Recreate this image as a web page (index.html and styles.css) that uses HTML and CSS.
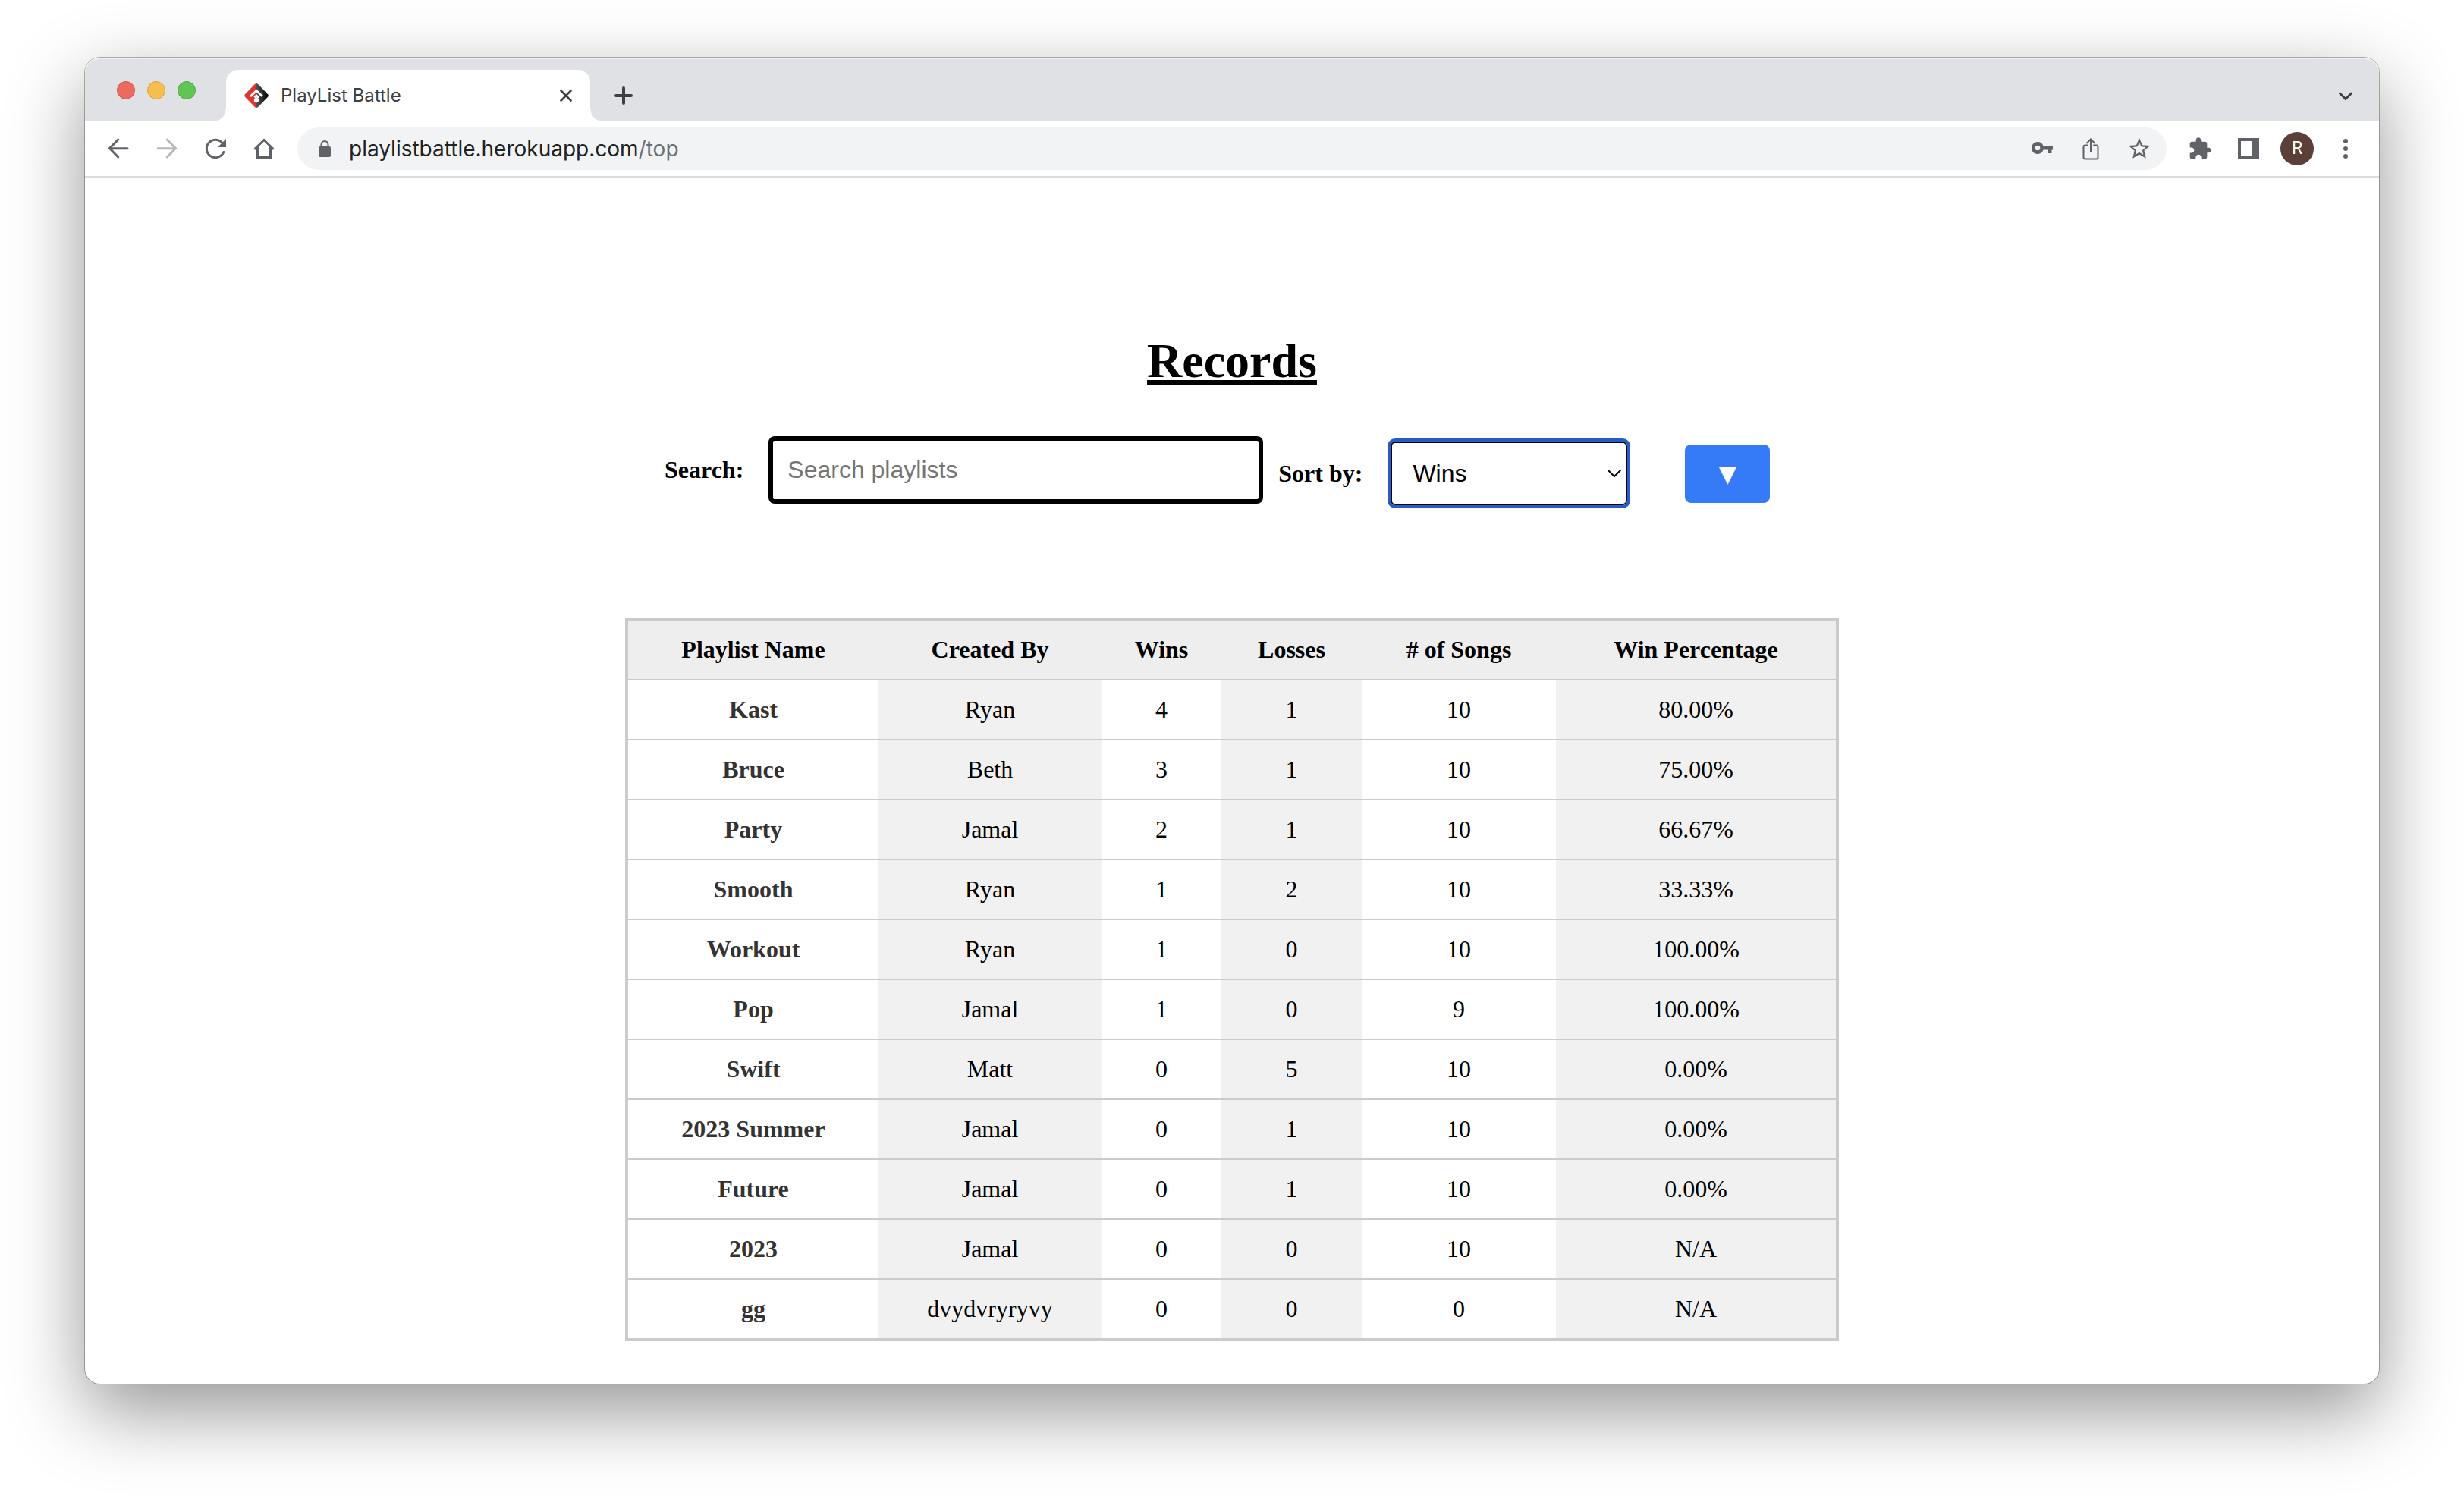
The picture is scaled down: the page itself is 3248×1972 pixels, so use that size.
FILE: index.html
```html
<!DOCTYPE html>
<html lang="en">
<head>
<meta charset="utf-8">
<title>PlayList Battle</title>
<link rel="stylesheet" href="styles.css">
</head>
<body>
<div class="window">
  <header class="tab-strip">
    <div class="lights">
      <span class="light light-close"></span>
      <span class="light light-minimize"></span>
      <span class="light light-zoom"></span>
    </div>
    <div class="tab">
      <svg class="icon" viewBox="0 0 32 32" aria-hidden="true">
        <defs><linearGradient id="dark" x1="16" x2="32" y1="0" y2="0" gradientUnits="userSpaceOnUse"><stop offset="0" stop-color="#555"/><stop offset="1" stop-color="#000"/></linearGradient></defs>
        <path d="M16 0 14 .8 1 14.2Q-.5 16 1 17.800L14 31.200 16 32Z" fill="#d9372f"/>
        <path d="M16 0 18 .8 31 14.200Q32.500 16 31 17.800L18 31.200 16 32Z" fill="url(#dark)"/>
        <path d="M8 17 16 9.500 24 17M13.500 18.500 16 16 19 18.800" fill="none" stroke="#fff" stroke-width="3"/>
        <circle cx="16" cy="22" r="3.200" fill="#fff"/>
      </svg>
      <span class="tab-title">PlayList Battle</span>
      <button class="tab-close" aria-label="Close tab"><svg viewBox="0 0 16 16"><path d="M1.500 1.500 14.500 14.500M14.500 1.500 1.500 14.500"/></svg></button>
    </div>
    <button class="new-tab" aria-label="New tab"><svg viewBox="0 0 24 24"><path d="M12 2V22M2 12H22"/></svg></button>
    <button class="tool tab-search" aria-label="Search tabs"><svg class="icon" viewBox="0 0 32 32"><path d="M8.500 13 16 20.500 23.500 13" fill="none" stroke="#3c4043" stroke-width="3" stroke-linecap="round"/></svg></button>
  </header>
  <nav class="toolbar" aria-label="Browser toolbar">
    <div class="tools">
      <button class="tool" aria-label="Back"><svg class="icon line" viewBox="0 0 32 32"><path d="M28 15.700H5M15.800 4 4.500 15.500 15.800 27"/></svg></button>
      <button class="tool faded" aria-label="Forward" disabled><svg class="icon line" viewBox="0 0 32 32"><path d="M4 15.700H27M16.200 4 27.500 15.500 16.200 27"/></svg></button>
      <button class="tool" aria-label="Reload"><svg class="icon line" viewBox="0 0 32 32"><path d="M24.600 8A11.700 11.700 0 1 0 26.800 20.500"/><path d="M30 3V14H19Z" fill="#5f6368" stroke="none"/></svg></button>
      <button class="tool" aria-label="Home"><svg class="icon line" viewBox="0 0 32 32"><path d="M4.300 16 16 4.500 27.700 16M7.500 13.500V27.500H24.500V13.500"/></svg></button>
    </div>
    <div class="address">
      <svg class="icon" viewBox="0 0 32 32" aria-hidden="true"><rect x="8" y="13" width="16" height="14" rx="2" fill="#5f6368"/><path d="M11.500 13.500V10.500a4.500 4.500 0 0 1 9 0V13.500" fill="none" stroke="#5f6368" stroke-width="2"/></svg>
      <span class="url">playlistbattle.herokuapp.com<span class="path">/top</span></span>
      <div class="tools">
        <button class="tool" aria-label="Passwords"><svg class="icon" viewBox="0 0 32 32"><path fill-rule="evenodd" d="M10 7a8 8 0 1 0 7.500 10.500H24V22H28.500V17.500H30V12.500H17.500A8 8 0 0 0 10 7zM10 11.700a3.300 3.300 0 1 1 0 6.600 3.300 3.300 0 0 1 0-6.600z" fill="#5f6368"/></svg></button>
        <button class="tool" aria-label="Share"><svg class="icon thin" viewBox="0 0 32 32"><path d="M12 11.500H8.500a2 2 0 0 0-2 2V27.500a2 2 0 0 0 2 2H23.500a2 2 0 0 0 2-2V13.500a2 2 0 0 0-2-2H20M16 20V4M11 8.500 16 3.500 21 8.500"/></svg></button>
        <button class="tool" aria-label="Bookmark"><svg class="icon-large" viewBox="0 0 24 24"><path fill="#5f6368" d="M22 9.240l-7.190-.62L12 2 9.190 8.630 2 9.240l5.460 4.730L5.820 21 12 17.270 18.180 21l-1.630-7.030L22 9.240zM12 15.400l-3.760 2.270 1-4.280-3.320-2.880 4.380-.38L12 6.100l1.710 4.040 4.380.38-3.320 2.880 1 4.280L12 15.400z"/></svg></button>
      </div>
    </div>
    <div class="tools">
      <button class="tool" aria-label="Extensions"><svg class="icon" viewBox="0 0 24 24"><path fill="#5f6368" d="M20.500 11H19V7c0-1.100-.9-2-2-2h-4V3.500C13 2.120 11.880 1 10.500 1S8 2.120 8 3.500V5H4c-1.100 0-1.990.9-1.990 2v3.800H3.500c1.490 0 2.700 1.210 2.700 2.700s-1.210 2.700-2.700 2.700H2V20c0 1.100.9 2 2 2h3.800v-1.500c0-1.490 1.210-2.700 2.700-2.700 1.490 0 2.700 1.210 2.700 2.700V22H17c1.100 0 2-.9 2-2v-4h1.500c1.380 0 2.500-1.120 2.500-2.500S21.880 11 20.500 11z"/></svg></button>
      <button class="tool" aria-label="Side panel"><svg class="icon" viewBox="0 0 32 32"><path fill="#5f6368" fill-rule="evenodd" d="M2 2H30V30H2ZM6 6V26H20V6Z"/></svg></button>
      <button class="tool" aria-label="Profile"><span class="avatar">R</span></button>
      <button class="tool" aria-label="Menu"><svg class="icon" viewBox="0 0 32 32" fill="#5f6368"><circle cx="16" cy="6" r="3"/><circle cx="16" cy="16" r="3"/><circle cx="16" cy="26" r="3"/></svg></button>
    </div>
  </nav>
  <main class="page">
    <h1 class="title">Records</h1>
    <form class="filters">
      <div class="field search-field">
        <label for="search">Search:</label>
        <input class="search" id="search" type="text" placeholder="Search playlists">
      </div>
      <div class="field">
        <label for="sort">Sort by:</label>
        <div class="select-wrap">
          <select class="sort" id="sort"><option>Wins</option><option>Losses</option><option>Win Percentage</option></select>
          <svg class="caret" viewBox="0 0 20 12" aria-hidden="true"><path d="M2 2 10 10 18 2"/></svg>
        </div>
        <button class="order" type="button" aria-label="Descending">▼</button>
      </div>
    </form>
    <table class="records">
      <colgroup><col class="col-name"><col class="col-by"><col class="col-wins"><col class="col-losses"><col class="col-songs"><col class="col-pct"></colgroup>
      <thead><tr><th>Playlist Name</th><th>Created By</th><th>Wins</th><th>Losses</th><th># of Songs</th><th>Win Percentage</th></tr></thead>
      <tbody>
        <tr><td><a href="#">Kast</a></td><td>Ryan</td><td>4</td><td>1</td><td>10</td><td>80.00%</td></tr>
        <tr><td><a href="#">Bruce</a></td><td>Beth</td><td>3</td><td>1</td><td>10</td><td>75.00%</td></tr>
        <tr><td><a href="#">Party</a></td><td>Jamal</td><td>2</td><td>1</td><td>10</td><td>66.67%</td></tr>
        <tr><td><a href="#">Smooth</a></td><td>Ryan</td><td>1</td><td>2</td><td>10</td><td>33.33%</td></tr>
        <tr><td><a href="#">Workout</a></td><td>Ryan</td><td>1</td><td>0</td><td>10</td><td>100.00%</td></tr>
        <tr><td><a href="#">Pop</a></td><td>Jamal</td><td>1</td><td>0</td><td>9</td><td>100.00%</td></tr>
        <tr><td><a href="#">Swift</a></td><td>Matt</td><td>0</td><td>5</td><td>10</td><td>0.00%</td></tr>
        <tr><td><a href="#">2023 Summer</a></td><td>Jamal</td><td>0</td><td>1</td><td>10</td><td>0.00%</td></tr>
        <tr><td><a href="#">Future</a></td><td>Jamal</td><td>0</td><td>1</td><td>10</td><td>0.00%</td></tr>
        <tr><td><a href="#">2023</a></td><td>Jamal</td><td>0</td><td>0</td><td>10</td><td>N/A</td></tr>
        <tr><td><a href="#">gg</a></td><td>dvydvryryvy</td><td>0</td><td>0</td><td>0</td><td>N/A</td></tr>
      </tbody>
    </table>
  </main>
</div>
</body>
</html>
```
FILE: styles.css
```css
* { box-sizing: border-box; }

body {
  margin: 0;
  padding: 76px 112px 148px;
  background: #fff;
  color: #000;
  font-family: "Liberation Serif", "Times New Roman", serif;
  font-size: 32px;
  line-height: 37px;
}

button {
  padding: 0;
  border: 0;
  background: none;
  color: inherit;
}

svg { display: block; }
.icon { width: 32px; height: 32px; flex: none; }
.icon-large { width: 34px; height: 34px; }
.line { fill: none; stroke: #5f6368; stroke-width: 3; stroke-linecap: round; }
.thin { fill: none; stroke: #5f6368; stroke-width: 2; stroke-linecap: round; }

.window {
  border-radius: 20px;
  background: #fff;
  box-shadow: 0 0 0 1px rgba(0, 0, 0, .28), 0 36px 100px rgba(0, 0, 0, .42);
}

/* Tab strip */
.tab-strip {
  display: flex;
  align-items: center;
  height: 84px;
  padding: 0 12px 0 42px;
  border-radius: 20px 20px 0 0;
  background: #dfe1e5;
  box-shadow: inset 0 2px 0 #eff0f2;
}
.lights { display: flex; gap: 16px; margin-right: 40px; padding-top: 2px; }
.light { width: 24px; height: 24px; border-radius: 50%; border: 1px solid; }
.light-close { background: #ed6a5e; border-color: #d55549; }
.light-minimize { background: #f4bf4f; border-color: #d8a23c; }
.light-zoom { background: #61c554; border-color: #50a73f; }

.tab {
  position: relative;
  display: flex;
  align-items: center;
  align-self: flex-end;
  gap: 16px;
  width: 480px;
  height: 68px;
  padding: 0 24px;
  border-radius: 16px 16px 0 0;
  background: #fff;
}
.tab::before,
.tab::after {
  content: "";
  position: absolute;
  bottom: 0;
  width: 16px;
  height: 16px;
}
.tab::before { right: 100%; background: radial-gradient(circle at 0 0, transparent 15px, #fff 16px); }
.tab::after { left: 100%; background: radial-gradient(circle at 100% 0, transparent 15px, #fff 16px); }
.tab-title {
  flex: 1;
  color: #3c4043;
  font-family: Inter, sans-serif;
  font-size: 24px;
  line-height: 32px;
}
.tab-close svg { width: 16px; height: 16px; stroke: #3c4043; stroke-width: 2.6; stroke-linecap: round; }
.new-tab { align-self: flex-end; height: 68px; margin-left: 32px; }
.new-tab svg { width: 24px; height: 24px; stroke: #3c4043; stroke-width: 4; stroke-linecap: round; }

/* Toolbar */
.toolbar {
  display: flex;
  align-items: center;
  gap: 12px;
  padding: 8px 12px;
  border-bottom: 2px solid #dadbdc;
}
.tools { display: flex; align-items: center; }
.tool { display: flex; align-items: center; justify-content: center; width: 64px; height: 56px; }
.tab-search { align-self: flex-end; height: 68px; margin-left: auto; }
.faded { opacity: .45; }
.address {
  display: flex;
  flex: 1;
  align-items: center;
  height: 56px;
  padding: 0 4px 0 20px;
  border-radius: 28px;
  background: #f1f3f4;
}
.url {
  flex: 1;
  margin-left: 16px;
  color: #202124;
  font-family: Inter, sans-serif;
  font-size: 28px;
  line-height: 40px;
}
.path { color: #6b6e72; }
.avatar {
  width: 44px;
  height: 44px;
  border-radius: 50%;
  background: #5a4038;
  color: #fff;
  font-family: Roboto, sans-serif;
  font-size: 23px;
  line-height: 44px;
}

/* Page content */
.page { padding: 205px 40px 56px; }
.title {
  margin: 0 0 63px;
  font-size: 64px;
  line-height: 73px;
  text-align: center;
  text-decoration: underline;
}
.filters {
  display: flex;
  align-items: flex-end;
  gap: 20px;
  max-width: 1496px;
  margin: 0 auto 144px;
}
.field { display: flex; flex: none; align-items: center; }
.field label { font-weight: bold; }
.search-field { padding-bottom: 6px; }
.search {
  width: 652px;
  height: 89px;
  margin-left: 33px;
  padding: 0 19px;
  border: 6px solid #000;
  border-radius: 8px;
  background: #fff;
  font-family: "Liberation Sans", Arial, sans-serif;
  font-size: 32px;
}
.search::placeholder { color: #757575; opacity: 1; }
.select-wrap { position: relative; margin-left: 33px; }
.sort {
  display: block;
  width: 320px;
  height: 92px;
  padding: 0 29px;
  border: 4px solid #245dca;
  border-radius: 10px;
  background: #fff;
  box-shadow: inset 0 0 0 2px #000;
  color: #000;
  font-family: "Liberation Sans", Arial, sans-serif;
  font-size: 32px;
  appearance: none;
}
.caret {
  position: absolute;
  top: 40px;
  right: 11px;
  width: 20px;
  height: 12px;
  fill: none;
  stroke: #000;
  stroke-width: 2;
  stroke-linecap: round;
  pointer-events: none;
}
.order {
  width: 112px;
  height: 77px;
  margin-left: 72px;
  border-radius: 8px;
  background: #357af6;
  color: #fff;
  font-family: "DejaVu Sans", sans-serif;
  font-size: 30px;
}

.records {
  width: 100%;
  max-width: 1600px;
  margin: 0 auto;
  border: 4px solid #cbcbcb;
  border-spacing: 0;
  table-layout: fixed;
  text-align: center;
}
.col-name { width: 330px; }
.col-by { width: 294px; }
.col-wins { width: 158px; }
.col-losses { width: 185px; }
.col-songs { width: 256px; }
.col-pct { width: 369px; }
.records th { padding: 20px 0; background: #eee; }
.records td { padding: 20px 0; border-top: 2px solid #cbcbcb; }
.records td:nth-child(even) { background: #f1f1f1; }
.records a { color: #333; font-weight: bold; text-decoration: none; }
```
